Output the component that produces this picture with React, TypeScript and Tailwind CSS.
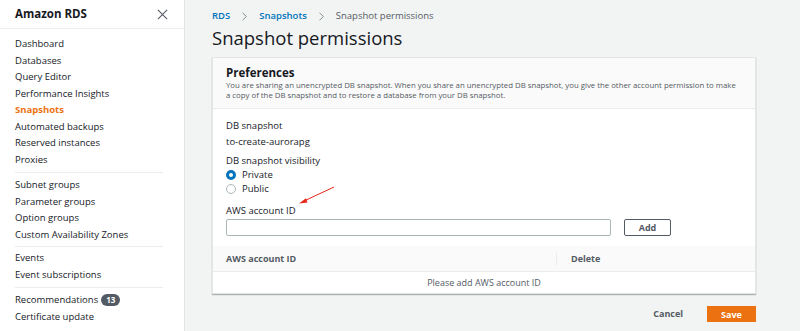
import React from "react";

const navGroups: string[][] = [
  [
    "Dashboard",
    "Databases",
    "Query Editor",
    "Performance Insights",
    "Snapshots",
    "Automated backups",
    "Reserved instances",
    "Proxies",
  ],
  ["Subnet groups", "Parameter groups", "Option groups", "Custom Availability Zones"],
  ["Events", "Event subscriptions"],
];

const dividerClass = ["h-px bg-[#eaeded] my-[4px]", "h-px bg-[#eaeded] my-[3px]", "h-px bg-[#eaeded] my-[4px]"];

const Sidebar: React.FC = () => (
  <aside className="w-[185px] shrink-0 bg-white border-r border-[#e3e5e5] h-full">
    <div className="h-[29px] flex items-center justify-between pl-[15px] pr-[16px] border-b border-[#eaeded]">
      <span className="text-[11.5px] font-bold text-[#16191f]">Amazon RDS</span>
      <svg width="11" height="11" viewBox="0 0 12 12" className="text-[#545b64]">
        <path d="M1 1L11 11M11 1L1 11" stroke="currentColor" strokeWidth="1.2" />
      </svg>
    </div>
    <nav className="pl-[15px] pr-[21px] pt-[7px] text-[9.5px] text-[#16191f]">
      {navGroups.map((group, gi) => (
        <div key={gi}>
          {group.map((item) => (
            <div
              key={item}
              className={
                item === "Snapshots"
                  ? "h-[16.5px] leading-[16.5px] font-bold text-[#ec7211]"
                  : "h-[16.5px] leading-[16.5px]"
              }
            >
              {item}
            </div>
          ))}
          <div className={dividerClass[gi]} />
        </div>
      ))}
      <div className="h-[16.5px] leading-[16.5px] flex items-center gap-[3px]">
        Recommendations
        <span className="h-[12px] px-[5px] rounded-full bg-[#545b64] text-white text-[8px] font-bold leading-[12px]">
          13
        </span>
      </div>
      <div className="h-[16.5px] leading-[16.5px]">Certificate update</div>
    </nav>
  </aside>
);

const Chevron: React.FC = () => (
  <svg width="7" height="9" viewBox="0 0 7 9" className="text-[#879596]">
    <path d="M1.5 0.8L5.5 4.5L1.5 8.2" fill="none" stroke="currentColor" strokeWidth="1" />
  </svg>
);

const Radio: React.FC<{ checked?: boolean; label: string }> = ({ checked, label }) => (
  <div className="flex items-center gap-[6px] h-[14px]">
    {checked ? (
      <span className="w-[10px] h-[10px] rounded-full border-[3px] border-[#0073bb] bg-white" />
    ) : (
      <span className="w-[10px] h-[10px] rounded-full border border-[#aab7b8] bg-white" />
    )}
    <span className="text-[9.5px] text-[#16191f]">{label}</span>
  </div>
);

const App: React.FC = () => {
  return (
    <div
      className="flex w-[800px] h-[331px] overflow-hidden bg-[#f2f3f3]"
      style={{ fontFamily: '"Open Sans", "Liberation Sans", sans-serif' }}
    >
      <Sidebar />
      <main className="flex-1 pl-[27px] pr-[44px]">
        {/* Breadcrumb */}
        <div className="flex items-center gap-[11px] pt-[9px] h-[23px] text-[9.5px]">
          <span className="text-[#0073bb] font-semibold">RDS</span>
          <Chevron />
          <span className="text-[#0073bb] font-semibold">Snapshots</span>
          <Chevron />
          <span className="text-[#545b64]">Snapshot permissions</span>
        </div>
        <h1 className="text-[18.5px] leading-[28px] text-[#16191f] mt-[1px]">Snapshot permissions</h1>

        {/* Card */}
        <div className="mt-[5px] bg-white border border-[#e3e5e5] shadow-[0_1px_1px_rgba(0,28,36,0.3)]">
          <div className="bg-[#fafafa] h-[51px] px-[13px] pt-[8px] border-b border-[#eaeded]">
            <div className="text-[11.5px] font-bold text-[#16191f] leading-[13px]">Preferences</div>
            <p className="text-[7.8px] leading-[10px] text-[#545b64] mt-[1px]">
              You are sharing an unencrypted DB snapshot. When you share an unencrypted DB snapshot, you give the other
              account permission to make a copy of the DB snapshot and to restore a database from your DB snapshot.
            </p>
          </div>

          <div className="px-[13px] pt-[9px] pb-[10px] text-[9.5px] text-[#16191f]">
            <div className="leading-[16px]">DB snapshot</div>
            <div className="leading-[16px]">to-create-aurorapg</div>
            <div className="leading-[16px] mt-[3px]">DB snapshot visibility</div>
            <div className="-mt-[1px]">
              <Radio checked label="Private" />
              <Radio label="Public" />
            </div>
            <div className="relative leading-[16px] mt-[7px]">
              AWS account ID
              <svg
                className="absolute left-[72px] top-[-17px]"
                width="38"
                height="22"
                viewBox="0 0 38 22"
              >
                <line x1="36" y1="1" x2="6" y2="15" stroke="#e8261a" strokeWidth="1" />
                <path d="M1 17.5L8 12.2L9.6 16.4Z" fill="#e8261a" />
              </svg>
            </div>
            <div className="flex items-center">
              <div className="w-[385px] h-[17px] border border-[#aab7b8] rounded-[2px] bg-white" />
              <button className="ml-[13px] w-[47px] h-[17px] border border-[#545b64] rounded-[2px] text-[9px] font-bold text-[#545b64] leading-none">
                Add
              </button>
            </div>
          </div>

          {/* Table */}
          <div className="flex items-center h-[26px] bg-[#fafafa] border-b border-[#eaeded] text-[9px] font-bold text-[#545b64]">
            <div className="w-[344px] pl-[13px] border-r border-[#eaeded] h-[12px] leading-[12px]">AWS account ID</div>
            <div className="pl-[14px]">Delete</div>
          </div>
          <div className="h-[21px] flex items-center justify-center text-[9px] text-[#545b64]">
            Please add AWS account ID
          </div>
        </div>

        {/* Footer */}
        <div className="flex items-center justify-end gap-[24px] mt-[12px]">
          <span className="text-[9px] font-bold text-[#545b64]">Cancel</span>
          <button className="w-[49px] h-[16px] bg-[#ec7211] text-white text-[9px] font-bold leading-none">
            Save
          </button>
        </div>
      </main>
    </div>
  );
};

export default App;
